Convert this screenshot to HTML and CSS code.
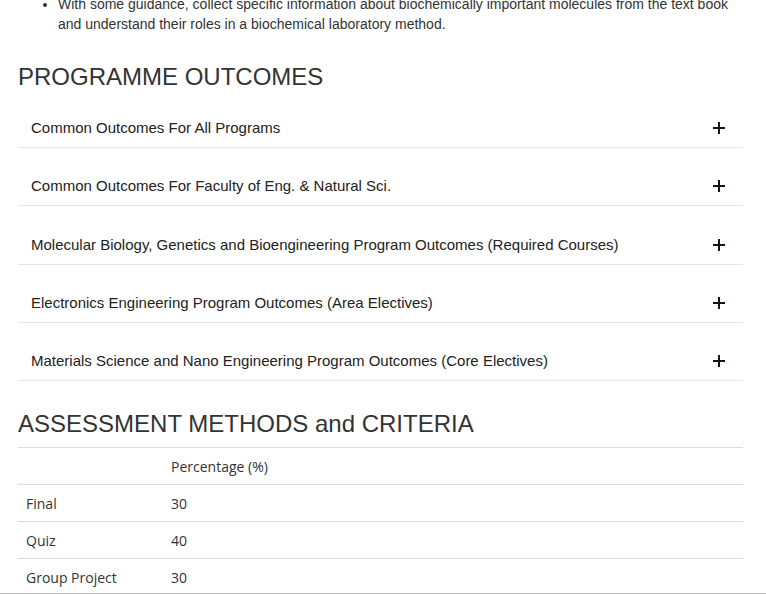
FILE: index.html
```html
<!DOCTYPE html>
<html lang="en">
<head>
  <meta charset="UTF-8" />
  <meta name="viewport" content="width=device-width, initial-scale=1.0" />
  <title>Course Outcomes</title>
  <link rel="stylesheet" href="styles.css">
</head>
<body>

  <div class="container">
    <ul class="outcomes">
      <li>With some guidance, collect specific information about biochemically important molecules from the text book and understand their roles in a biochemical laboratory method.</li>
    </ul>

    <h2>PROGRAMME OUTCOMES</h2>

    <div class="accordion">
      <div class="acc-item"><span>Common Outcomes For All Programs</span><span class="plus"></span></div>
      <div class="acc-item"><span>Common Outcomes For Faculty of Eng. &amp; Natural Sci.</span><span class="plus"></span></div>
      <div class="acc-item"><span>Molecular Biology, Genetics and Bioengineering Program Outcomes (Required Courses)</span><span class="plus"></span></div>
      <div class="acc-item"><span>Electronics Engineering Program Outcomes (Area Electives)</span><span class="plus"></span></div>
      <div class="acc-item"><span>Materials Science and Nano Engineering Program Outcomes (Core Electives)</span><span class="plus"></span></div>
    </div>

    <h2 class="second">ASSESSMENT METHODS and CRITERIA</h2>

    <table class="assessment">
      <tr><td></td><td>Percentage (%)</td></tr>
      <tr><td>Final</td><td>30</td></tr>
      <tr><td>Quiz</td><td>40</td></tr>
      <tr><td>Group Project</td><td>30</td></tr>
    </table>
  </div>

  <div class="bottom-bar"></div>

</body>
</html>
```

FILE: styles.css
```css
body {
  font-family: "Liberation Sans", Arial, sans-serif;
  margin: 0;
  padding: 0;
  background: #fff;
  color: #333;
  overflow: hidden;
}

.container {
  width: 725px;
  margin: 0 0 0 18px;
}

.outcomes {
  margin: -6px 0 0;
  padding-left: 40px;
  font-size: 14px;
  line-height: 20px;
}

h2 {
  font-size: 24px;
  font-weight: normal;
  margin: 29px 0 0;
  line-height: 28px;
  color: #333;
}

.acc-item {
  display: flex;
  justify-content: space-between;
  align-items: center;
  margin-top: 19px;
  padding: 9px 18px 9px 13px;
  line-height: 20px;
  border-bottom: 1px solid #e5e5e5;
  font-size: 15px;
  color: #222;
}

.acc-item:first-child {
  margin-top: 18px;
}

.acc-item:nth-child(3) {
  margin-top: 20px;
}

.plus {
  position: relative;
  width: 12px;
  height: 12px;
}

.plus::before,
.plus::after {
  content: "";
  position: absolute;
  background: #1a1018;
}

.plus::before {
  left: 0;
  top: 5px;
  width: 12px;
  height: 2px;
}

.plus::after {
  left: 5px;
  top: 0;
  width: 2px;
  height: 12px;
}

h2.second {
  margin-top: 29px;
}

.assessment {
  width: 100%;
  margin-top: 9px;
  border-collapse: collapse;
  font-family: "Open Sans", sans-serif;
  font-size: 14px;
  color: #333;
}

.assessment td {
  height: 36px;
  padding: 0 8px;
  border-top: 1px solid #ddd;
  vertical-align: middle;
}

.assessment td:first-child {
  width: 129px;
}

.bottom-bar {
  position: fixed;
  left: 0;
  right: 0;
  bottom: 0;
  height: 1px;
  background: #bbb;
}
```
